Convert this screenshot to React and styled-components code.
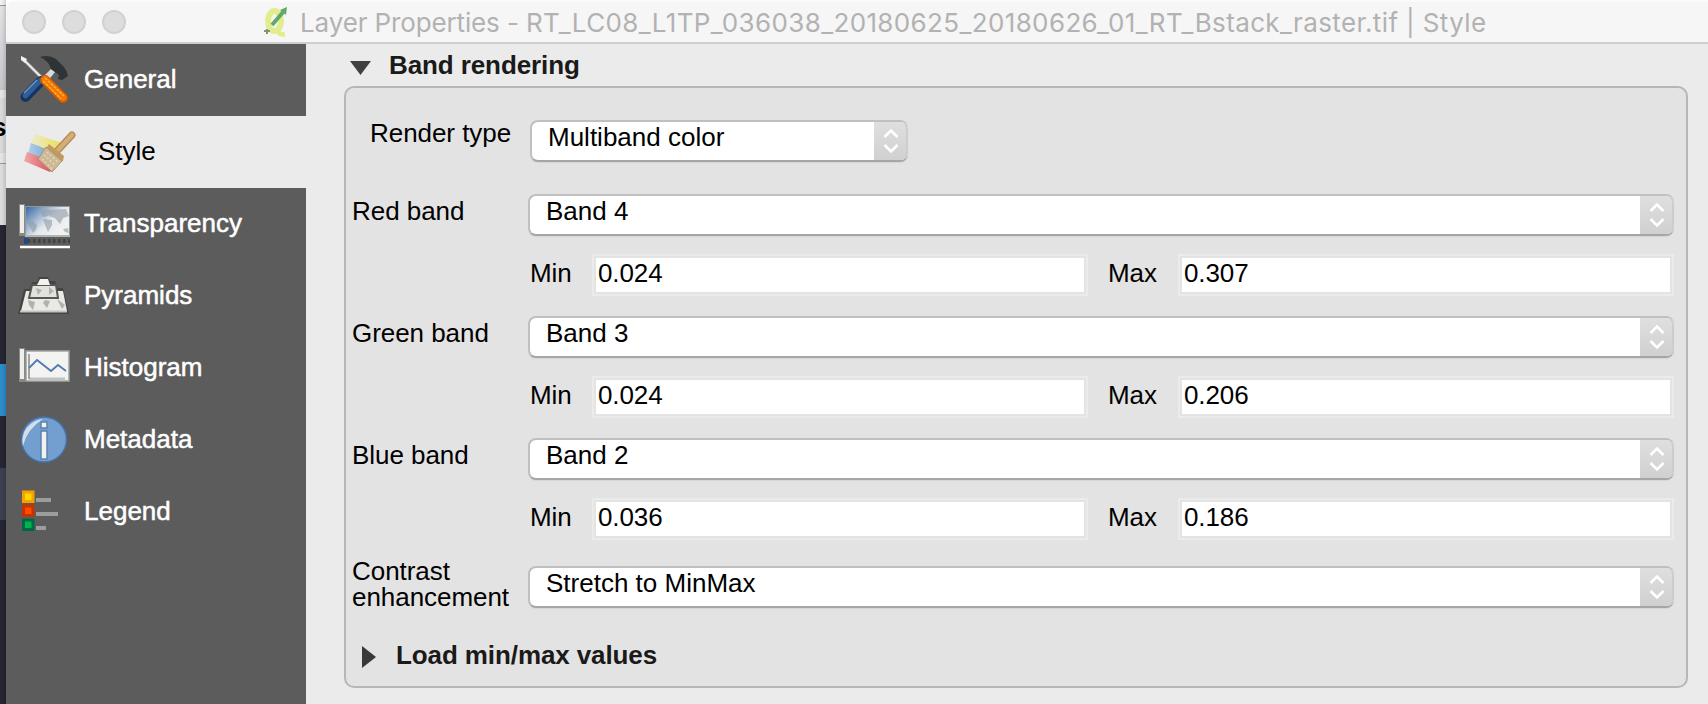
import React from "react";
import styled, { createGlobalStyle } from "styled-components";

const Global = createGlobalStyle`
  body { margin: 0; overflow: hidden; background: #ebebeb; }
  * { box-sizing: border-box; }
`;

const Screen = styled.div`
  display: flex;
  width: 1708px;
  height: 704px;
  background: linear-gradient(90deg, #c9c9cc, #bdbdc0 6px, #fff 6px);
  font: 26px/30px "Liberation Sans", Arial, sans-serif;
  color: #000;
  white-space: nowrap;
`;

const Backdrop = styled.div`
  display: flex;
  flex-direction: column;
  width: 6px;
  flex: none;
  overflow: hidden;
`;

const Slice = styled.div`
  flex: none;
  height: ${(p) => p.$h}px;
  background: ${(p) => p.$bg};
  box-shadow: inset -5px 0 4px -4px rgba(0, 0, 0, 0.2);
  line-height: 59px;
  text-indent: -8px;
  font-weight: 700;
`;

const Window = styled.div`
  display: flex;
  flex-direction: column;
  flex: 1;
  border-top-left-radius: 10px;
  overflow: hidden;
  background: #ebebeb;
`;

const TitleBar = styled.header`
  display: flex;
  align-items: center;
  height: 44px;
  flex: none;
  padding-left: 16px;
  background: #f6f6f6;
  border-top: 2px solid #fbfbfb;
  border-bottom: 2px solid #cecece;
`;

const Light = styled.span`
  width: 24px;
  height: 24px;
  margin-right: 16px;
  border-radius: 50%;
  background: #dddddd;
  border: 2px solid #d1d1d1;
`;

const Title = styled.h1`
  margin: 2px 0 0 10px;
  font: 400 26px/32px Inter, sans-serif;
  letter-spacing: -0.13px;
  color: #b2b2b2;
`;

const LayerName = styled.span`
  letter-spacing: 0.37px;
`;

const AppIcon = styled.svg`
  margin-left: 120px;
`;

const Body = styled.div`
  display: flex;
  flex: 1;
`;

const Sidebar = styled.nav`
  width: 300px;
  flex: none;
  background: #5c5c5c;
`;

const NavItem = styled.div`
  display: flex;
  align-items: center;
  height: 72px;
  padding-left: 12px;
  color: ${(p) => (p.$active ? "#000" : "#fff")};
  background: ${(p) => (p.$active ? "#ebebeb" : "transparent")};
  -webkit-text-stroke: ${(p) => (p.$active ? "0" : "0.5px #fff")};

  svg {
    flex: none;
    margin-right: ${(p) => (p.$active ? 20 : 12)}px;
    margin-left: ${(p) => (p.$active ? 4 : 0)}px;
  }
  span { margin-top: -2px; }
`;

const Main = styled.main`
  flex: 1;
  padding: 6px 20px 16px 38px;
`;

const SectionHeader = styled.h2`
  display: flex;
  align-items: center;
  height: 30px;
  margin: ${(p) => (p.$nested ? "32px 0 0 10px" : "0 0 6px 5px")};
  font-size: 26px;
  font-weight: 700;
  letter-spacing: -0.1px;
  color: #1a1a1a;

  svg { margin: ${(p) => (p.$nested ? "4px 20px 0 0" : "6px 17px 0 0")}; }
`;

const Group = styled.section`
  height: 602px;
  padding: 30px 12px 0 6px;
  border: 2px solid #b7b7b7;
  border-radius: 10px;
  background: #e3e3e3;
`;

const Row = styled.div`
  display: flex;
  align-items: flex-start;
  height: ${(p) => p.$h}px;
`;

const Label = styled.label`
  flex: none;
  width: ${(p) => p.$w}px;
  padding-left: ${(p) => p.$indent || 0}px;
  margin-top: ${(p) => p.$top || 0}px;
  line-height: ${(p) => p.$lh || 30}px;
  letter-spacing: -0.05px;
  white-space: pre-line;
`;

const Combo = styled.div`
  display: flex;
  justify-content: space-between;
  flex: ${(p) => (p.$w ? "none" : 1)};
  width: ${(p) => (p.$w ? p.$w + "px" : "auto")};
  height: 42px;
  margin-top: ${(p) => p.$top || 0}px;
  border-radius: 8px;
  overflow: hidden;
  background: #fff;
  border: 2px solid #c0c0c0;
  border-bottom-color: #a6a6a6;
  border-right: 0;
  box-shadow: 0 1px 1px rgba(0, 0, 0, 0.06);

  > span { padding-left: 16px; }
`;

const Stepper = styled.div`
  display: flex;
  align-items: center;
  justify-content: center;
  width: 34px;
  height: 42px;
  margin-top: -2px;
  flex: none;
  border: 2px solid #cdcdcd;
  border-top-color: #d6d6d6;
  border-left: 0;
  border-radius: 0 8px 8px 0;
  background: linear-gradient(#dfdfdf, #d0d0d0);

  svg { margin-left: 2px; }
`;

const Field = styled.div`
  flex: 1;
  height: 42px;
  padding: 2px;
  border: 2px solid #ebebeb;
  background: #fff;
  box-shadow: inset 0 0 0 2px #e3e3e3;
  text-indent: 2px;
  letter-spacing: -0.1px;
`;

const Range = styled.div`
  display: flex;
  align-items: flex-start;
  height: 62px;
  margin-left: 176px;
`;

function Select({ value, ...rest }) {
  return (
    <Combo {...rest}>
      <span>{value}</span>
      <Stepper>
        <svg width="16" height="28" fill="none" stroke="#fff" strokeWidth="2.6">
          <path d="M1.5 10L8 3.5L14.5 10M1.5 18L8 24.5L14.5 18" />
        </svg>
      </Stepper>
    </Combo>
  );
}

function Band({ name, band, min, max }) {
  return (
    <>
      <Row $h={60}>
        <Label $w={176} $top={2}>{name}</Label>
        <Select value={band} />
      </Row>
      <Range>
        <Label $w={64} $indent={2} $top={4}>Min</Label>
        <Field>{min}</Field>
        <Label $w={90} $indent={20} $top={4}>Max</Label>
        <Field>{max}</Field>
      </Range>
    </>
  );
}

const Tools = () => (
  <svg width="54" height="54" viewBox="0 0 54 54">
    <path d="M5 6L26 27" stroke="#8c8f8a" strokeWidth="3.5" />
    <path d="M5 6L25 26" stroke="#eeeeec" strokeWidth="1.8" />
    <path d="M3 3l6 3-2 4-4-3z" fill="#f4f4f2" />
    <path d="M33 16L24 25l5 4 8-10z" fill="#d8dad5" />
    <path d="M22 4q9-3 16 2l8 8q3 4 4 9l-6 4-4-1 1-4-8-6q-2-8-11-12z" fill="#2e3436" />
    <path d="M23 28L7.5 44" stroke="#17335f" strokeWidth="10" strokeLinecap="round" />
    <path d="M22 27.5L7.5 42.5" stroke="#2f5d9c" strokeWidth="5.5" strokeLinecap="round" />
    <path d="M19 27L6 40" stroke="#7296c4" strokeWidth="1.5" />
    <path d="M27 27L45 45" stroke="#ce5c00" strokeWidth="10" strokeLinecap="round" />
    <path d="M27 26.5L45 44.5" stroke="#f57900" strokeWidth="7" strokeLinecap="round" />
    <path d="M27 25L46 43M25 28L43 46" stroke="#fcaf3e" strokeWidth="1.5" strokeDasharray="3 1" />
  </svg>
);

const Brush = () => (
  <svg width="56" height="54" viewBox="0 0 56 54">
    <defs>
      <linearGradient id="y"><stop stopColor="#edeccb" /><stop offset="1" stopColor="#e8df55" /></linearGradient>
      <linearGradient id="b"><stop stopColor="#b5cdea" /><stop offset="1" stopColor="#6c9fd7" /></linearGradient>
      <linearGradient id="r"><stop stopColor="#efa9ad" /><stop offset="1" stopColor="#dc414b" /></linearGradient>
    </defs>
    <path d="M13 9L40 18L34 32L9 19z" fill="url(#y)" />
    <path d="M9 18L32 27L22 38L6 29z" fill="url(#b)" />
    <path d="M5 27L34 38L28 47L2 36z" fill="url(#r)" />
    <path d="M50 10L36 25" stroke="#b58b52" strokeWidth="7" strokeLinecap="round" />
    <path d="M50 10L36 25" stroke="#d2ae78" strokeWidth="4.5" strokeLinecap="round" />
    <path d="M27 19L42 31L41 36L35 37L23 25z" fill="#c29a61" />
    <path d="M24 22L40 36L30 47L16 34z" fill="#cdb995" stroke="#ac946b" />
    <path d="M22 30l12 11M25 27l12 11M20 34l10 10" stroke="#e3d6be" strokeWidth="1.5" strokeDasharray="2 2" />
  </svg>
);

const MapIcon = () => (
  <svg width="54" height="54" viewBox="0 0 54 54">
    <defs>
      <linearGradient id="sea" x2="1" y2=".7"><stop stopColor="#3465a4" /><stop offset=".6" stopColor="#e4e8ee" /><stop offset="1" stopColor="#f3f3f1" /></linearGradient>
    </defs>
    <path d="M1 7h6v32H1z" fill="#888a85" />
    <path d="M2 8h4v28H2z" fill="#f1eeee" />
    <path d="M7.5 9.5h44v29h-44z" fill="url(#sea)" stroke="#929994" />
    <path d="M10 25l5-1 4 4-1 5-3 3-3-6zM22 14l8-2 3 3-3 4-5 1zM31 13l17-1 3 7-6 2-3 6-5-6-6-2zM25 22l9 1v5l-4 7-3-7zM45 32l5-1 1 5-4-1z" fill="#8f9da5" opacity=".6" />
    <path d="M7 39h45" stroke="#aeb5b2" strokeWidth="2" />
    <path d="M10 44h42" stroke="#414342" strokeWidth="4" strokeDasharray="2.5 2.5" />
    <path d="M6 41h4v6H6z" fill="#204a87" />
    <path d="M2 50h50" stroke="#fff" strokeWidth="2.4" />
  </svg>
);

const Pyramid = () => (
  <svg width="54" height="54" viewBox="0 0 54 54">
    <path d="M6 20h5l3-7h5l2-5h9l2 4h5l3 7h5l6 26H0z" fill="#434543" />
    <path d="M8 22h37l4 20H3z" fill="#e9e9e6" />
    <path d="M14 16h24l2 13H11z" fill="#e1e2de" stroke="#555855" strokeWidth="2" />
    <path d="M22 10h8l2 6H19z" fill="#f2f2ef" />
    <path d="M10 31l7 2-2 8-4-5zM27 31l5 1-3 7-4-5zM39 30l8 6-3 4zM18 19l6 2-4 5zM31 18l5 4-5 4z" fill="#b0b3ac" />
    <path d="M2 42.5h47" stroke="#c5c6c3" strokeWidth="2" />
  </svg>
);

const Histogram = () => (
  <svg width="54" height="54" viewBox="0 0 54 54">
    <path d="M1 7h6v34H1z" fill="#888a85" /><path d="M2 8h4v30H2z" fill="#f1eeee" />
    <path d="M8 10h43v30H8z" fill="#f3f3f2" stroke="#a0a5a0" strokeWidth="1.5" />
    <path d="M11 38h36" stroke="#c0c2bf" strokeWidth="3" />
    <path d="M11 13v25" stroke="#888a85" strokeWidth="1.5" />
    <path d="M11 27l8-8 14 11 7-6 8 6" fill="none" stroke="#517bae" strokeWidth="1.8" />
  </svg>
);

const Info = () => (
  <svg width="54" height="54" viewBox="0 0 54 54">
    <circle cx="26" cy="26.5" r="22.5" fill="#729fcf" stroke="#4672a9" strokeWidth="1.5" />
    <path d="M5 33A22 22 0 0 1 25 6Q9 16 5 33z" fill="#d5dee9" />
    <path d="M23 9h6v6h-6zM23 18h6v28h-6z" fill="#f1f1ef" stroke="#5c82b2" strokeWidth="1.5" />
  </svg>
);

const Legend = () => (
  <svg width="54" height="54" viewBox="0 0 54 54">
    <rect x="5.5" y="7" width="9.5" height="9.5" fill="#ffd700" stroke="#f5a100" strokeWidth="3" />
    <rect x="5.5" y="21" width="9.5" height="9.5" fill="#ff4b00" stroke="#c63200" strokeWidth="3" />
    <rect x="5.5" y="35" width="9.5" height="9.5" fill="#00b34c" stroke="#006846" strokeWidth="3" />
    <path d="M18 15h15M18 29h22M18 43h10" stroke="#9d9d9d" strokeWidth="4" />
  </svg>
);

const Qgis = () => (
  <AppIcon width="28" height="32" viewBox="0 0 28 32">
    <ellipse cx="12.5" cy="15" rx="6.5" ry="10" fill="none" stroke="#e4ed8e" strokeWidth="6" />
    <path d="M14 22q3 8 9 6" fill="none" stroke="#e4ed8e" strokeWidth="4.5" />
    <path d="M10 19L22 5" stroke="#62a868" strokeWidth="4" />
    <path d="M18 4l7-3-1 8z" fill="#62a868" />
    <path d="M2 25h6M5 23v5" stroke="#7f9678" strokeWidth="2" />
  </AppIcon>
);

const NAV = [
  ["General", Tools],
  ["Style", Brush],
  ["Transparency", MapIcon],
  ["Pyramids", Pyramid],
  ["Histogram", Histogram],
  ["Metadata", Info],
  ["Legend", Legend],
];

const BACKDROP = [
  [5, "#f2f2f2"], [1, "#999"], [84, "linear-gradient(#e2e3e5, #c4c6ca)"], [8, "#e5e5e5"],
  [55, "#d9d9da", "s"], [10, "#e5e5e5"], [1, "#999"], [61, "#dcdcdc"],
  [139, "#252632"], [52, "#2c8fc9"], [52, "#252632"], [52, "#3d4050"], [184, "#252632"],
];

export default function App() {
  return (
    <>
      <Global />
      <Screen>
        <Backdrop>
          {BACKDROP.map(([h, bg, text], i) => <Slice key={i} $h={h} $bg={bg}>{text}</Slice>)}
        </Backdrop>
        <Window>
          <TitleBar>
            <Light /><Light /><Light />
            <Qgis />
            <Title>
              Layer Properties -{" "}
              <LayerName>RT_LC08_L1TP_036038_20180625_20180626_01_RT_Bstack_raster.tif | Style</LayerName>
            </Title>
          </TitleBar>
          <Body>
            <Sidebar>
              {NAV.map(([name, Icon]) => (
                <NavItem key={name} $active={name === "Style"}><Icon /><span>{name}</span></NavItem>
              ))}
            </Sidebar>
            <Main>
              <SectionHeader>
                <svg width="23" height="16"><path d="M1 1h21L11.5 15z" fill="#404040" /></svg>
                Band rendering
              </SectionHeader>
              <Group>
                <Row $h={76}>
                  <Label $w={178} $indent={18}>Render type</Label>
                  <Select value="Multiband color" $w={378} $top={2} />
                </Row>
                <Band name="Red band" band="Band 4" min="0.024" max="0.307" />
                <Band name="Green band" band="Band 3" min="0.024" max="0.206" />
                <Band name="Blue band" band="Band 2" min="0.036" max="0.186" />
                <Row $h={48}>
                  <Label $w={176} $top={-2} $lh={26}>{"Contrast\nenhancement"}</Label>
                  <Select value="Stretch to MinMax" $top={6} />
                </Row>
                <SectionHeader $nested>
                  <svg width="14" height="22"><path d="M0 0v22L14 11z" fill="#383838" /></svg>
                  Load min/max values
                </SectionHeader>
              </Group>
            </Main>
          </Body>
        </Window>
      </Screen>
    </>
  );
}
